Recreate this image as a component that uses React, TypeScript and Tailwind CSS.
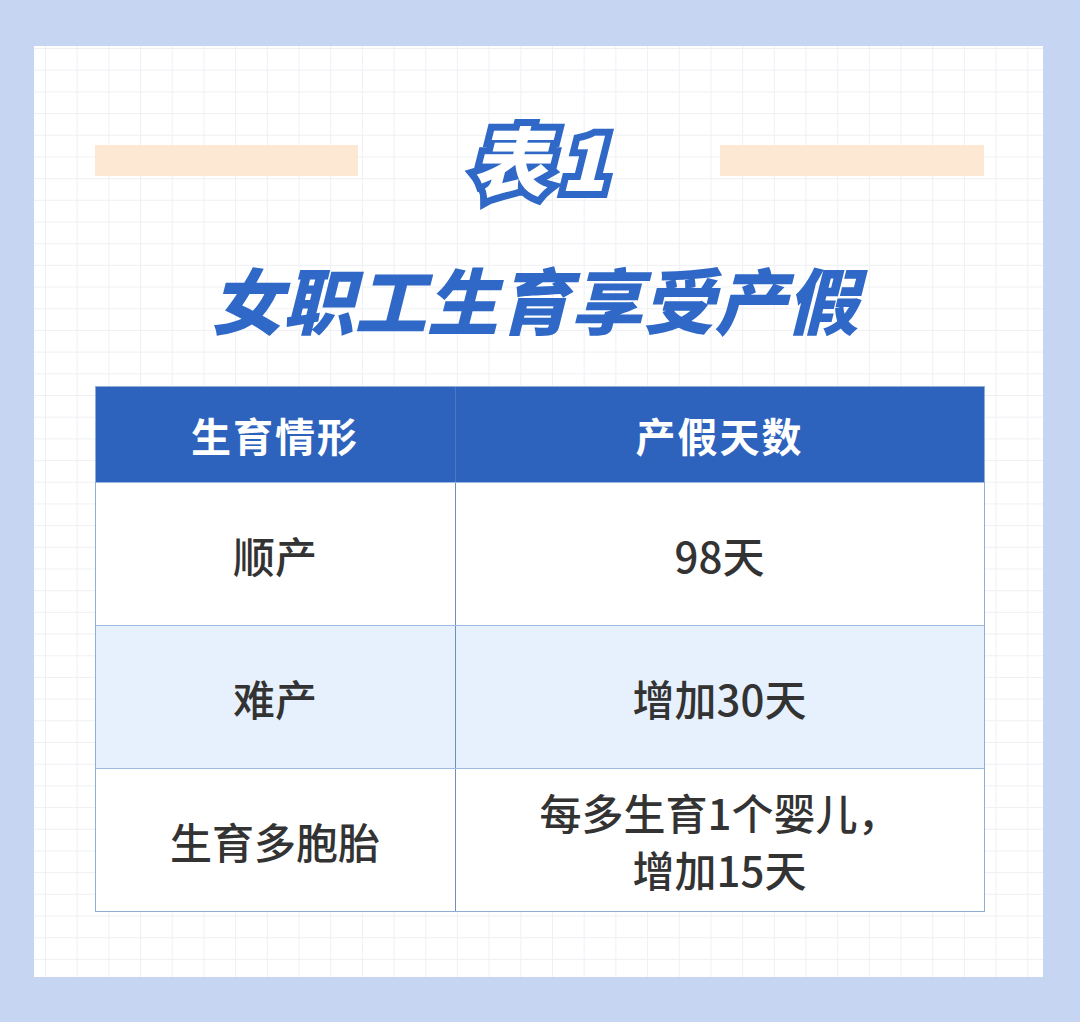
import React from 'react';

// ============================================================================
// Data
// ============================================================================

interface LeaveRow {
  situation: string;
  days: React.ReactNode;
  shaded?: boolean;
}

const rows: LeaveRow[] = [
  { situation: '顺产', days: '98天' },
  { situation: '难产', days: '增加30天', shaded: true },
  {
    situation: '生育多胞胎',
    days: (
      <>
        每多生育1个婴儿，
        <br />
        增加15天
      </>
    ),
  },
];

// ============================================================================
// Component
// ============================================================================

const LeaveTable: React.FC = () => (
  <div className="w-[890px] border border-[#8eaed3] bg-white">
    {/* Header */}
    <div className="grid h-[95px] grid-cols-[360px_1fr] bg-[#2e63bd] text-white">
      <div className="flex items-center justify-center border-r border-[#4a78c4] text-[40px] font-bold tracking-[2px]">
        生育情形
      </div>
      <div className="flex items-center justify-center text-[40px] font-bold tracking-[2px]">
        产假天数
      </div>
    </div>

    {rows.map((row, i) => (
      <div
        key={i}
        className={`grid h-[143px] grid-cols-[360px_1fr] border-t border-[#9dbbe0] text-[#333333] ${
          row.shaded ? 'bg-[#e6f1fd]' : 'bg-white'
        }`}
      >
        <div className="flex items-center justify-center border-r border-[#6d8fbf] text-[42px] font-medium">
          {row.situation}
        </div>
        <div className="flex items-center justify-center text-center text-[42px] font-medium leading-[57px]">
          <span>{row.days}</span>
        </div>
      </div>
    ))}
  </div>
);

export default function App() {
  return (
    <div className="h-[1022px] w-[1080px] bg-[#c5d5f2] pl-[34px] pt-[46px] font-['Noto_Sans_CJK_SC','Noto_Sans',sans-serif]">
      <div className="flex h-[931px] w-[1009px] flex-col items-center bg-white pl-[61px] pr-[59px] pt-[64px] [background-image:linear-gradient(to_right,#eef0f4_1px,transparent_1px),linear-gradient(to_bottom,#eef0f4_1px,transparent_1px)] [background-position:11px_2px] [background-size:31.7px_21.7px]">
        {/* 表1 */}
        <div className="flex h-[100px] w-full items-center justify-between">
          <div className="h-[31px] w-[263px] bg-[#fde8d3]" />
          <div className="mb-[4px] flex items-center gap-[12px] text-[76px] font-black italic leading-none text-white [-webkit-text-stroke:14px_#2f68c6] [paint-order:stroke_fill]">
            <span>表</span>
            <span>1</span>
          </div>
          <div className="h-[31px] w-[264px] bg-[#fde8d3]" />
        </div>

        {/* Title */}
        <div className="mr-[10px] mt-[37px] h-[102px] text-[72px] font-black italic leading-[102px] text-[#2f68c6]">
          女职工生育享受产假
        </div>

        <div className="mt-[37px]">
          <LeaveTable />
        </div>
      </div>
    </div>
  );
}
